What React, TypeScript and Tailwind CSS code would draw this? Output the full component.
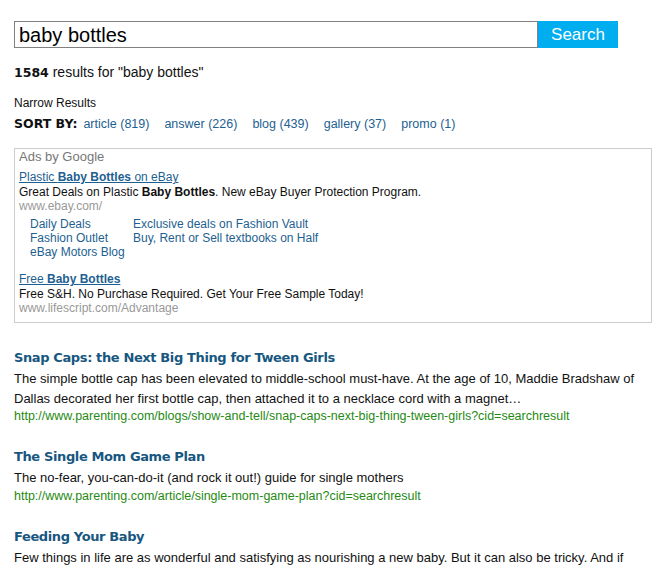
import React from 'react';

// ─── Data ─────────────────────────────────────────────────────────────────────

const sorts = [
    { label: 'article', count: 819 },
    { label: 'answer', count: 226 },
    { label: 'blog', count: 439 },
    { label: 'gallery', count: 37 },
    { label: 'promo', count: 1 },
];

const results = [
    {
        title: 'Snap Caps: the Next Big Thing for Tween Girls',
        body: 'The simple bottle cap has been elevated to middle-school must-have. At the age of 10, Maddie Bradshaw of Dallas decorated her first bottle cap, then attached it to a necklace cord with a magnet…',
        url: 'http://www.parenting.com/blogs/show-and-tell/snap-caps-next-big-thing-tween-girls?cid=searchresult',
    },
    {
        title: 'The Single Mom Game Plan',
        body: 'The no-fear, you-can-do-it (and rock it out!) guide for single mothers',
        url: 'http://www.parenting.com/article/single-mom-game-plan?cid=searchresult',
    },
    {
        title: 'Feeding Your Baby',
        body: 'Few things in life are as wonderful and satisfying as nourishing a new baby. But it can also be tricky. And if you are a first-time mom, you probably have plenty of questions about how to begin.',
        url: 'http://www.parenting.com/article/feeding-your-baby?cid=searchresult',
    },
];

// ─── Component ────────────────────────────────────────────────────────────────

export default function App() {
    return (
        <div className="w-[662px] h-[568px] overflow-hidden bg-white px-[14px] pt-[21px] font-['Liberation_Sans',Arial,sans-serif] text-[12px] text-[#111]">
            {/* Search bar */}
            <div className="flex h-[27px] w-[604px]">
                <div className="flex-1 border border-[#808080] px-[4px] flex items-center text-[20px] leading-none text-black">
                    baby bottles
                </div>
                <button className="w-[80px] bg-[#00aeef] text-white text-[17px] leading-none">Search</button>
            </div>

            {/* Count */}
            <div className="mt-[15px] text-[14px] leading-[18px]">
                <span className="font-['DejaVu_Sans',sans-serif] font-bold text-[12.5px]">1584</span> results for "baby bottles"
            </div>

            {/* Sort */}
            <div className="mt-[12px] leading-[18px]">Narrow Results</div>
            <div className="mt-[3px] flex items-center gap-[15px] leading-[18px]">
                <span className="font-['DejaVu_Sans',sans-serif] font-bold text-[12.5px] -mr-[9px]">SORT BY:</span>
                {sorts.map((s) => (
                    <a key={s.label} className="text-[#1e5f91] text-[12.5px]">
                        {s.label} ({s.count})
                    </a>
                ))}
            </div>

            {/* Ads */}
            <div className="mt-[15px] w-[638px] border border-[#cccccc] px-[4px] pt-[1px] pb-[7px] leading-[14px]">
                <div className="text-[13px] text-[#777]">Ads by Google</div>
                <div className="mt-[6px]">
                    <a className="block leading-[15px] text-[#1e5f91] underline">Plastic <b>Baby Bottles</b> on eBay</a>
                    <div>Great Deals on Plastic <b>Baby Bottles</b>. New eBay Buyer Protection Program.</div>
                    <div className="text-[#999]">www.ebay.com/</div>
                    <div className="mt-[4px] pl-[11px] grid grid-cols-[103px_auto] text-[#1e5f91]">
                        <span>Daily Deals</span>
                        <span>Exclusive deals on Fashion Vault</span>
                        <span>Fashion Outlet</span>
                        <span>Buy, Rent or Sell textbooks on Half</span>
                        <span>eBay Motors Blog</span>
                    </div>
                </div>
                <div className="mt-[13px]">
                    <a className="block leading-[15px] text-[#1e5f91] underline">Free <b>Baby Bottles</b></a>
                    <div>Free S&amp;H. No Purchase Required. Get Your Free Sample Today!</div>
                    <div className="text-[#999]">www.lifescript.com/Advantage</div>
                </div>
            </div>

            {/* Results */}
            <div className="mt-[26px] w-[625px] flex flex-col gap-[24px]">
                {results.map((r) => (
                    <div key={r.title}>
                        <div className="font-['DejaVu_Sans',sans-serif] font-bold text-[13px] tracking-[-0.38px] leading-[18px] text-[#17577f]">
                            {r.title}
                        </div>
                        <div className="mt-[2px] text-[13px] leading-[19.5px]">{r.body}</div>
                        <div className="text-[12.5px] text-[#1f8a14] leading-[16px] whitespace-nowrap">{r.url}</div>
                    </div>
                ))}
            </div>
        </div>
    );
}
